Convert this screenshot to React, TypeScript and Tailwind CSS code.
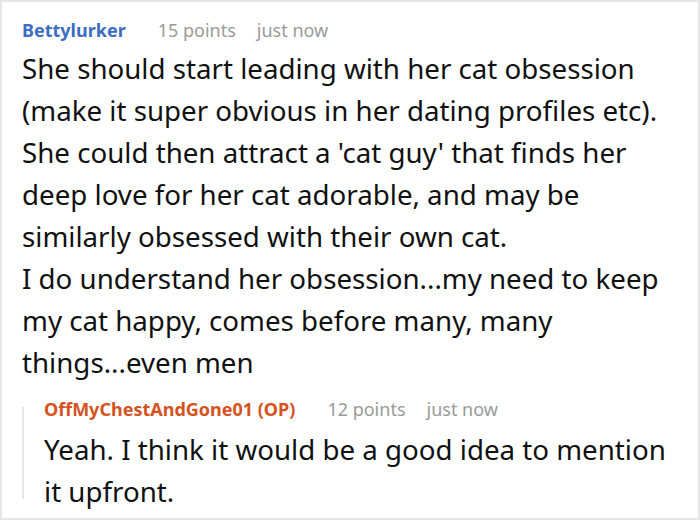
export default function App() {
  return (
    <div
      className="w-[700px] h-[520px] border-2 border-[#e6e6e6] bg-white overflow-hidden"
      style={{ fontFamily: '"Noto Sans", "Open Sans", sans-serif' }}
    >
      <div className="pl-[20px] pr-[12px] pt-[16px]">
        <div className="flex items-baseline text-[18px] leading-[24px]">
          <span className="font-bold text-[#3b6dc2]">Bettylurker</span>
          <span className="ml-[32px] text-[#9a9a9a]">15 points</span>
          <span className="ml-[21px] text-[#9a9a9a]">just now</span>
        </div>
        <p className="mt-[5px] text-[27.7px] leading-[42px] text-[#111]">
          She should start leading with her cat obsession (make it super obvious in her dating profiles etc). She could then attract a 'cat guy' that finds her deep love for her cat adorable, and may be similarly obsessed with their own cat.
          <br />
          I do understand her obsession...my need to keep my cat happy, comes before many, many things...even men
        </p>
        <div className="flex mt-[14px]">
          <div className="w-[2px] h-[92px] mt-[10px] bg-[#e6e6e6] shrink-0" />
          <div className="ml-[20px]">
            <div className="flex items-baseline text-[18px] leading-[24px]">
              <span className="font-bold text-[#d4531f]">OffMyChestAndGone01 (OP)</span>
              <span className="ml-[32px] text-[#9a9a9a]">12 points</span>
              <span className="ml-[21px] text-[#9a9a9a]">just now</span>
            </div>
            <p className="mt-[7px] text-[27.7px] leading-[42px] text-[#111]">
              Yeah. I think it would be a good idea to mention it upfront.
            </p>
          </div>
        </div>
      </div>
    </div>
  );
}
